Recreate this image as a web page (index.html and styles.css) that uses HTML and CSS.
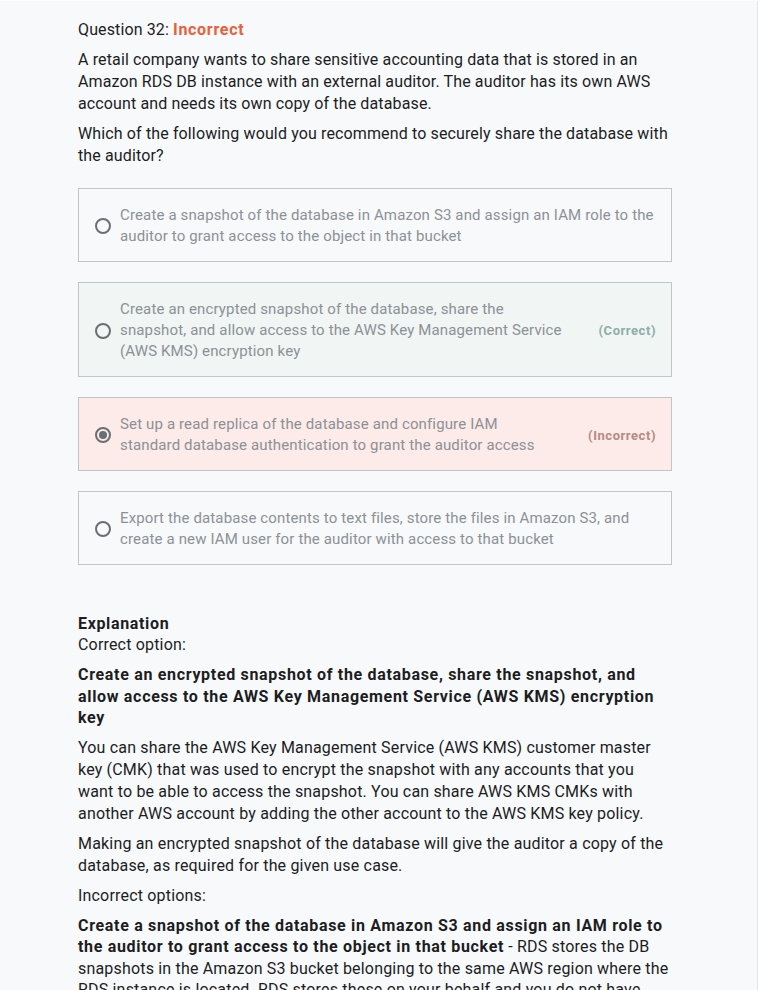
FILE: index.html
```html
<!DOCTYPE html>
<html>
<head>
<meta charset="utf-8">
<link rel="stylesheet" href="styles.css">
</head>
<body>
<div class="page">
  <div class="content">
    <div class="qtitle">Question 32: <span class="status">Incorrect</span></div>
    <p class="qtext">A retail company wants to share sensitive accounting data that is stored in an Amazon RDS DB instance with an external auditor. The auditor has its own AWS account and needs its own copy of the database.</p>
    <p class="qtext">Which of the following would you recommend to securely share the database with the auditor?</p>

    <div class="options">
      <div class="option">
        <span class="radio"></span>
        <span class="otext">Create a snapshot of the database in Amazon S3 and assign an IAM role to the auditor to grant access to the object in that bucket</span>
      </div>
      <div class="option correct">
        <span class="radio"></span>
        <span class="otext">Create an encrypted snapshot of the database, share the snapshot, and allow access to the AWS Key Management Service (AWS KMS) encryption key</span>
        <span class="tag">(Correct)</span>
      </div>
      <div class="option incorrect">
        <span class="radio checked"></span>
        <span class="otext">Set up a read replica of the database and configure IAM standard database authentication to grant the auditor access</span>
        <span class="tag">(Incorrect)</span>
      </div>
      <div class="option">
        <span class="radio"></span>
        <span class="otext">Export the database contents to text files, store the files in Amazon S3, and create a new IAM user for the auditor with access to that bucket</span>
      </div>
    </div>

    <div class="explanation">
      <div class="ehead">Explanation</div>
      <div class="elabel">Correct option:</div>
      <p class="bold">Create an encrypted snapshot of the database, share the snapshot, and allow access to the AWS Key Management Service (AWS KMS) encryption key</p>
      <p>You can share the AWS Key Management Service (AWS KMS) customer master key (CMK) that was used to encrypt the snapshot with any accounts that you want to be able to access the snapshot. You can share AWS KMS CMKs with another AWS account by adding the other account to the AWS KMS key policy.</p>
      <p>Making an encrypted snapshot of the database will give the auditor a copy of the database, as required for the given use case.</p>
      <p>Incorrect options:</p>
      <p class="last"><strong>Create a snapshot of the database in Amazon S3 and assign an IAM role to the auditor to grant access to the object in that bucket</strong> - RDS stores the DB snapshots in the Amazon S3 bucket belonging to the same AWS region where the RDS instance is located. RDS stores these on your behalf and you do not have direct access to them in S3.</p>
    </div>
  </div>
</div>
</body>
</html>
```

FILE: styles.css
```css
html, body {
  margin: 0;
  padding: 0;
  background: #ffffff;
}
body {
  font-family: Roboto, "Liberation Sans", Arial, sans-serif;
  color: #1c1d1f;
  height: 990px;
  overflow: hidden;
}
.page {
  width: 757px;
  margin-top: 1px;
  background: #f7f9fa;
  border-right: 1px solid #e3e5e8;
  min-height: 1100px;
}
.content {
  padding: 18px 0 0 78px;
  width: 594px;
}
.qtitle {
  font-size: 16px;
  line-height: 22px;
  margin-bottom: 8px;
  letter-spacing: 0.12px;
}
.status {
  color: #e8603c;
  font-weight: 700;
  letter-spacing: 0.7px;
}
.qtext {
  font-size: 16px;
  line-height: 22px;
  margin: 0 0 8px 0;
  letter-spacing: 0.13px;
}
.options {
  margin-top: 21px;
  display: flex;
  flex-direction: column;
  gap: 20px;
}
.option {
  border: 1px solid #c2c5c8;
  display: flex;
  align-items: center;
  padding: 16px 15px 14px 16px;
  min-height: 42px;
}
.option.correct {
  background: #f1f5f4;
}
.option.incorrect {
  background: #fcebe8;
}
.radio {
  width: 12px;
  height: 12px;
  border: 2px solid #6a6f73;
  border-radius: 50%;
  flex: none;
  margin-right: 9px;
  box-sizing: content-box;
  position: relative;
}
.radio.checked::after {
  content: "";
  position: absolute;
  left: 2px;
  top: 2px;
  width: 8px;
  height: 8px;
  border-radius: 50%;
  background: #6a6f73;
}
.otext {
  flex: 1;
  font-size: 15px;
  line-height: 21px;
  color: #8c9196;
  letter-spacing: 0.14px;
}
.tag {
  flex: none;
  font-size: 13px;
  font-weight: 700;
  margin-left: 32px;
  letter-spacing: 0.55px;
}
.correct .tag {
  color: #8cb0a6;
}
.incorrect .tag {
  color: #b88a82;
}
.explanation {
  margin-top: 49px;
  font-size: 16px;
  line-height: 22px;
  letter-spacing: 0.18px;
  width: 592px;
}
.ehead {
  font-weight: 700;
  line-height: 20px;
  letter-spacing: 0.65px;
}
.elabel {
  margin-bottom: 8px;
}
.explanation p {
  margin: 0 0 8px 0;
}
.explanation p.bold {
  font-weight: 700;
  line-height: 21.5px;
  letter-spacing: 0.68px;
}
.explanation p.last {
  line-height: 21.5px;
}
.explanation strong {
  letter-spacing: 0.68px;
}
```
